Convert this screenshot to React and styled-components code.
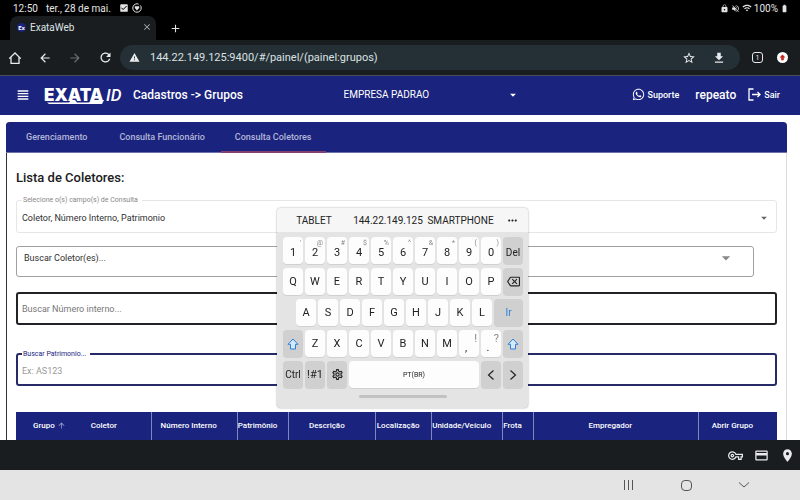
import React from "react";
import styled, { createGlobalStyle, css } from "styled-components";
import {
  MdArrowBack, MdArrowForward, MdRefresh, MdWarning, MdStarBorder, MdFileDownload,
  MdOutlineVpnKey, MdCreditCard, MdPlace, MdViewHeadline, MdClose, MdAdd, MdCheckBox,
  MdVolumeOff, MdWifi, MdBatteryFull, MdArrowDropDown, MdArrowUpward, MdMoreHoriz,
  MdOutlineBackspace, MdOutlineSettings, MdLock,
} from "react-icons/md";
import { FaWhatsapp } from "react-icons/fa";

const navy = "#1a237e";

const GlobalStyle = createGlobalStyle`
  * { box-sizing: border-box; }
  body { margin: 0; font-family: Roboto, "Liberation Sans", sans-serif; background: #fff; }
  button, input, select { font: inherit; color: inherit; }
  button { border: 0; padding: 0; background: none; display: inline-flex; align-items: center; justify-content: center; }
  svg { display: block; flex: none; }
`;

const Screen = styled.div`
  height: 100vh;
  display: flex;
  flex-direction: column;
  overflow: hidden;
`;

const StatusBar = styled.div`
  height: 16px;
  flex: none;
  display: flex;
  align-items: center;
  gap: 8px;
  padding: 0 11px 0 13px;
  background: #000;
  color: #e4e4e4;
  font-size: 10px;
`;

const StatusIcons = styled.span`
  display: flex;
  align-items: center;
  gap: ${(p) => (p.$end ? 2 : 3)}px;
  margin-left: ${(p) => (p.$end ? "auto" : "0")};
`;

const TabStrip = styled.div`
  height: 24px;
  flex: none;
  display: flex;
  background: #000;
  color: #dfe3e5;
  padding-left: 10px;
`;

const BrowserTab = styled.div`
  width: 146px;
  display: flex;
  align-items: center;
  gap: 4px;
  padding: 0 4px 2px 7px;
  border-radius: 8px 8px 0 0;
  background: #191d20;
  font-size: 10px;
  button { margin-left: auto; color: #aeb2b5; }
`;

const Favicon = styled.span`
  width: 9px;
  height: 9px;
  border-radius: 5px;
  background: ${navy};
  color: #fff;
  font-size: 6px;
  font-weight: 700;
  line-height: 9px;
  text-align: center;
`;

const NewTab = styled.button`
  width: 38px;
`;

const BrowserBar = styled.div`
  height: 36px;
  flex: none;
  display: flex;
  align-items: center;
  padding: 0 12px 0 8px;
  background: #191d20;
  border-bottom: 1px solid #454d57;
  color: #e8eaed;
`;

const NavButton = styled.button`
  width: ${(p) => p.$width || 30}px;
  height: 24px;
  justify-content: flex-start;
  color: ${(p) => (p.$dim ? "#6a6e71" : "#e8eaed")};
`;

const AddressBar = styled.div`
  flex: 1;
  height: 25px;
  display: flex;
  align-items: center;
  gap: 10px;
  padding: 0 13px 0 9px;
  margin-right: 12px;
  border-radius: 13px;
  background: #243036;
`;

const AddressInput = styled.input`
  flex: 1;
  min-width: 0;
  border: 0;
  padding: 0;
  outline: 0;
  background: none;
  color: #dde1e3;
  font-size: 11px;
`;

const AddressAction = styled.button`
  width: 16px;
  margin-left: 4px;
`;

const TabCount = styled.button`
  width: 11px;
  height: 11px;
  border: 1px solid #e8eaed;
  border-radius: 3px;
  font-size: 7px;
  margin-right: 14px;
`;

const UpdateButton = styled.button`
  width: 11px;
  height: 11px;
  border-radius: 6px;
  background: #fff;
  color: #c5221f;
`;

const AppHeader = styled.header`
  height: 39px;
  flex: none;
  display: flex;
  align-items: center;
  padding: 0 20px 2px 15px;
  background: ${navy};
  color: #fff;
`;

const MenuButton = styled.button`
  margin-right: 13px;
`;

const HeaderTitle = styled.h1`
  flex: 1;
  margin: 0 0 0 7px;
  font-size: 12px;
  font-weight: 500;
  white-space: nowrap;
`;

const SelectBox = styled.label`
  display: flex;
  align-items: center;
  select {
    flex: 1;
    min-width: 0;
    appearance: none;
    border: 0;
    padding: 0;
    outline: 0;
    background: none;
  }
`;

const CompanySelect = styled(SelectBox)`
  width: 176px;
  margin-right: 112px;
  font-size: 10px;
`;

const HeaderAction = styled.button`
  gap: 3px;
  margin-left: ${(p) => p.$gap || 0}px;
  font-size: ${(p) => (p.$large ? 12 : 9)}px;
  font-weight: 500;
`;

const Content = styled.main`
  flex: 1;
  min-height: 0;
  overflow: hidden;
  padding: 7px 13px 0 6px;
`;

const Card = styled.section`
  min-height: 100%;
  border-left: 1px solid #30333c;
  border-right: 1px solid #dcdcdc;
  border-radius: 4px 4px 0 0;
`;

const Tabs = styled.nav`
  height: 31px;
  display: flex;
  margin: 0 -1px;
  padding-left: 4px;
  border-radius: 4px 4px 0 0;
  border-bottom: 1px solid #6c72a8;
  background: ${navy};
`;

const Tab = styled.button`
  height: 31px;
  padding: 0 ${(p) => (p.$active ? 14 : 16)}px;
  color: #b4b7d8;
  font-size: 9px;
  font-weight: 500;
  border-bottom: 2px solid ${(p) => (p.$active ? "#83406f" : "transparent")};
`;

const Panel = styled.div`
  padding: 17px 9px 0;
`;

const SectionTitle = styled.h2`
  margin: 0 0 10px;
  color: #202020;
  font-size: 13px;
  font-weight: 500;
  line-height: 16px;
`;

const variants = {
  light: css`border: 1px solid #e6e6e6; color: #303030; height: 37px; margin: 0 0 13px;`,
  gray: css`border: 1px solid #a0a0a0; color: #303030; height: 31px; margin: 0 23px 15px 0; padding: 0 17px 8px 7px;`,
  dark: css`border: 2px solid #212126; color: #777; height: 33px; margin: 0 0 25px; padding: 0 4px;`,
  focus: css`border: 2px solid #262a66; color: #303030; height: 36px; margin: 0 0 26px; padding: 0 4px;`,
};

const Field = styled.fieldset`
  min-width: 0;
  padding: 0 5px;
  border-radius: 3px;
  font-size: 9px;
  display: flex;
  ${(p) => variants[p.$kind]}
  ${SelectBox} { flex: 1; }
  input {
    flex: 1;
    min-width: 0;
    border: 0;
    padding: 0;
    outline: 0;
    background: none;
  }
  input::placeholder { color: ${(p) => (p.$kind === "focus" ? "#999" : "#777")}; opacity: 1; }
`;

const Legend = styled.legend`
  height: 8px;
  padding: 0 4px 0 1px;
  color: ${(p) => (p.$active ? navy : "#888")};
  font-size: 7px;
  line-height: 8px;
`;

const GroupsTable = styled.table`
  width: 100%;
  table-layout: fixed;
  border-collapse: collapse;
  background: ${navy};
  color: #fff;
`;

const HeadCell = styled.th`
  width: ${(p) => p.$share}%;
  height: 28px;
  padding: 0 0 2px ${(p) => (p.$first ? 15 : 0)}px;
  border-left: 1px solid ${(p) => (p.$rule ? "#8186bd" : "transparent")};
  font-size: 8px;
  font-weight: 500;
  white-space: nowrap;
`;

const SortButton = styled.button`
  gap: 2px;
  svg { visibility: ${(p) => (p.$sorted ? "visible" : "hidden")}; color: #a3a7d0; }
`;

const AutofillBar = styled.div`
  height: 30px;
  flex: none;
  display: flex;
  align-items: center;
  justify-content: flex-end;
  gap: 11px;
  padding-right: 5px;
  background: #191d20;
  color: #e8eaed;
`;

const SystemBar = styled.div`
  height: 30px;
  flex: none;
  display: flex;
  align-items: center;
  justify-content: flex-end;
  gap: 46px;
  padding-right: 50px;
  background: #e4e4e4;
  color: #555;
`;

const Keyboard = styled.div`
  position: fixed;
  top: 208px;
  left: 277px;
  width: 251px;
  border-radius: 4px;
  overflow: hidden;
  background: #e4e4e4;
  box-shadow: 0 0 2px rgba(0, 0, 0, 0.4);
  color: #222;
`;

const Suggestions = styled.div`
  height: 24px;
  display: grid;
  grid-template-columns: 74px 74px 71px 1fr;
  background: #f6f6f6;
  font-size: 10px;
`;

const Rows = styled.div`
  display: flex;
  flex-direction: column;
  gap: 4px;
  padding: 5px 5px 0 6px;
`;

const KeyRow = styled.div`
  display: flex;
  gap: 2px;
  padding-left: ${(p) => (p.$indent ? 13 : 0)}px;
`;

const Key = styled.button`
  position: relative;
  height: 27px;
  width: 20px;
  flex: ${(p) => (p.$wide ? "1" : "none")};
  padding-top: ${(p) => (p.$low ? 3 : 0)}px;
  border-radius: 4px;
  background: ${(p) => (p.$soft ? "#d0d0d0" : "#fdfdfd")};
  box-shadow: 0 1px 0 #d0d0d0;
  color: ${(p) => (p.$blue ? "#2f7fd6" : "#222")};
  font-size: ${(p) => (p.$small ? 7 : p.$word ? 10 : 11)}px;
  white-space: nowrap;
`;

const PunctuationKey = styled(Key)`
  padding: 8px 6px 0 0;
`;

const KeyHint = styled.span`
  position: absolute;
  top: 3px;
  right: 2px;
  color: #888;
  font-size: ${(p) => (p.$large ? 11 : 7)}px;
  line-height: 1;
`;

const Handle = styled.div`
  width: 88px;
  height: 3px;
  margin: 7px auto 10px;
  border-radius: 2px;
  background: #c2c2c2;
`;

const Logo = () => (
  <svg width="82" height="24" viewBox="0 0 82 24" fill="#fff" role="img" aria-label="EXATA ID">
    <text x="0" y="18" fontFamily="Inter, sans-serif" fontWeight="900" fontSize="17">EXATA</text>
    <text x="62" y="18" fontFamily="Roboto, sans-serif" fontStyle="italic" fontWeight="500" fontSize="17">ID</text>
    <path d="M3 19.5H25L27 17H31L33 19.5H45L47 17H60L58 21H5Z" />
  </svg>
);

const HomeIcon = () => (
  <svg width="14" height="14" viewBox="0 0 14 14" fill="none" stroke="currentColor" strokeWidth="1.3">
    <path d="M1.2 7.6 7 2l5.8 5.6M3 6.2v6.2h8V6.2" />
  </svg>
);

const HeartCircle = () => (
  <svg width="10" height="10" viewBox="0 0 10 10" fill="none" stroke="currentColor">
    <circle cx="5" cy="5" r="4.2" strokeDasharray="21 2" />
    <path d="M5 7.4 2.8 5V3.6L4 3l1 .6L6 3l1.2.6V5Z" fill="currentColor" stroke="none" />
  </svg>
);

const UpdateIcon = () => (
  <svg width="7" height="7" viewBox="0 0 7 7" fill="currentColor"><path d="M3.5.5 6.5 3.5H4.8V6.3H2.2V3.5H.5Z" /></svg>
);

const ExitIcon = () => (
  <svg width="13" height="13" viewBox="0 0 13 13" fill="none" stroke="currentColor" strokeWidth="1.3">
    <path d="M5.5 1H1v11h4.5M4 6.5h8M9.5 4 12 6.5 9.5 9" />
  </svg>
);

const ShiftIcon = () => (
  <svg width="12" height="12" viewBox="0 0 12 12" fill="#d5e9fb" stroke="currentColor" strokeWidth="1" strokeLinejoin="round">
    <path d="M6 1 11 6.3H8.5V11h-5V6.3H1Z" />
  </svg>
);

const Chevron = ({ right }) => (
  <svg width="10" height="12" viewBox="0 0 10 12" fill="none" stroke="currentColor" strokeWidth="1.2">
    <path d={right ? "M2.5 1.5 7.5 6l-5 4.5" : "M7.5 1.5 2.5 6l5 4.5"} />
  </svg>
);

const RecentsIcon = () => (
  <svg width="12" height="12" viewBox="0 0 12 12" stroke="currentColor"><path d="M1.5 1v10M5.5 1v10M9.5 1v10" /></svg>
);
const HomeKeyIcon = () => (
  <svg width="11" height="11" viewBox="0 0 11 11" fill="none" stroke="currentColor"><rect x=".5" y=".5" width="10" height="10" rx="3.5" /></svg>
);
const HideIcon = () => (
  <svg width="12" height="12" viewBox="0 0 12 12" fill="none" stroke="currentColor"><path d="m1 3.5 5 4.5 5-4.5" /></svg>
);

const columns = [
  ["Grupo", 51], ["Coletor", 84], ["Número Interno", 86], ["Patrimônio", 52], ["Descrição", 87],
  ["Localização", 56], ["Unidade/Veículo", 71], ["Frota", 31], ["Empregador", 165], ["Abrir Grupo", 79],
];
const columnTotal = columns.reduce((sum, [, w]) => sum + w, 0);

const digits = [["1", "'"], ["2", "@"], ["3", "#"], ["4", "$"], ["5", "%"], ["6", "^"], ["7", "&"], ["8", "*"], ["9", "("], ["0", ")"]];
const letters = (text) => [...text].map((c) => <Key key={c}>{c}</Key>);

const ScreenKeyboard = () => (
  <Keyboard>
    <Suggestions>
      <button>TABLET</button>
      <button>144.22.149.125</button>
      <button>SMARTPHONE</button>
      <button aria-label="Mais"><MdMoreHoriz size={13} /></button>
    </Suggestions>
    <Rows>
      <KeyRow>
        {digits.map(([d, h]) => <Key key={d} $low>{d}<KeyHint>{h}</KeyHint></Key>)}
        <Key $soft $word $low>Del</Key>
      </KeyRow>
      <KeyRow>{letters("QWERTYUIOP")}<Key $soft aria-label="Apagar"><MdOutlineBackspace size={13} /></Key></KeyRow>
      <KeyRow $indent>{letters("ASDFGHJKL")}<Key $soft $wide $blue $word>Ir</Key></KeyRow>
      <KeyRow>
        <Key $soft $blue aria-label="Shift"><ShiftIcon /></Key>
        {letters("ZXCVBNM")}
        <PunctuationKey>,<KeyHint $large>!</KeyHint></PunctuationKey>
        <PunctuationKey>.<KeyHint $large>?</KeyHint></PunctuationKey>
        <Key $soft $blue aria-label="Shift direito"><ShiftIcon /></Key>
      </KeyRow>
      <KeyRow>
        <Key $soft $word>Ctrl</Key>
        <Key $soft>!#1</Key>
        <Key $soft aria-label="Configurações"><MdOutlineSettings size={13} /></Key>
        <Key $wide $small>PT(BR)</Key>
        <Key $soft aria-label="Esquerda"><Chevron /></Key>
        <Key $soft aria-label="Direita"><Chevron right /></Key>
      </KeyRow>
    </Rows>
    <Handle />
  </Keyboard>
);

export default function App() {
  return (
    <Screen>
      <GlobalStyle />
      <StatusBar>
        <span>12:50</span>
        <span>ter., 28 de mai.</span>
        <StatusIcons><MdCheckBox size={10} /><HeartCircle /></StatusIcons>
        <StatusIcons $end>
          <MdLock size={9} /><MdVolumeOff size={9} /><MdWifi size={10} /><span>100%</span><MdBatteryFull size={9} />
        </StatusIcons>
      </StatusBar>
      <TabStrip>
        <BrowserTab>
          <Favicon>Ex</Favicon>
          <span>ExataWeb</span>
          <button aria-label="Fechar aba"><MdClose size={10} /></button>
        </BrowserTab>
        <NewTab aria-label="Nova aba"><MdAdd size={13} /></NewTab>
      </TabStrip>
      <BrowserBar>
        <NavButton aria-label="Início"><HomeIcon /></NavButton>
        <NavButton aria-label="Voltar"><MdArrowBack size={14} /></NavButton>
        <NavButton $dim aria-label="Avançar"><MdArrowForward size={14} /></NavButton>
        <NavButton $width={22} aria-label="Recarregar"><MdRefresh size={15} /></NavButton>
        <AddressBar>
          <MdWarning size={11} />
          <AddressInput aria-label="Endereço" defaultValue="144.22.149.125:9400/#/painel/(painel:grupos)" />
          <AddressAction aria-label="Favorito"><MdStarBorder size={14} /></AddressAction>
          <AddressAction aria-label="Baixar"><MdFileDownload size={14} /></AddressAction>
        </AddressBar>
        <TabCount>1</TabCount>
        <UpdateButton aria-label="Atualizar"><UpdateIcon /></UpdateButton>
      </BrowserBar>
      <AppHeader>
        <MenuButton aria-label="Menu"><MdViewHeadline size={16} /></MenuButton>
        <Logo />
        <HeaderTitle>Cadastros -&gt; Grupos</HeaderTitle>
        <CompanySelect>
          <select aria-label="Empresa"><option>EMPRESA PADRAO</option></select>
          <MdArrowDropDown size={14} />
        </CompanySelect>
        <HeaderAction><FaWhatsapp size={13} />Suporte</HeaderAction>
        <HeaderAction $large $gap={16}>repeato</HeaderAction>
        <HeaderAction $gap={12}><ExitIcon />Sair</HeaderAction>
      </AppHeader>
      <Content>
        <Card>
          <Tabs>
            <Tab>Gerenciamento</Tab>
            <Tab>Consulta Funcionário</Tab>
            <Tab $active>Consulta Coletores</Tab>
          </Tabs>
          <Panel>
            <SectionTitle>Lista de Coletores:</SectionTitle>
            <Field $kind="light">
              <Legend>Selecione o(s) campo(s) de Consulta</Legend>
              <SelectBox>
                <select aria-label="Campos de consulta"><option>Coletor, Número Interno, Patrimonio</option></select>
                <MdArrowDropDown size={14} color="#666" />
              </SelectBox>
            </Field>
            <Field $kind="gray">
              <SelectBox>
                <select aria-label="Coletores"><option>Buscar Coletor(es)...</option></select>
                <MdArrowDropDown size={20} color="#888" />
              </SelectBox>
            </Field>
            <Field $kind="dark"><input aria-label="Número interno" placeholder="Buscar Número interno..." /></Field>
            <Field $kind="focus">
              <Legend $active>Buscar Patrimonio...</Legend>
              <input aria-label="Patrimonio" placeholder="Ex: AS123" />
            </Field>
            <GroupsTable>
              <thead>
                <tr>
                  {columns.map(([name, w], i) => (
                    <HeadCell key={name} $share={(w / columnTotal) * 100} $first={i === 0} $rule={i > 1}>
                      <SortButton $sorted={i === 0}>{name}<MdArrowUpward size={9} /></SortButton>
                    </HeadCell>
                  ))}
                </tr>
              </thead>
            </GroupsTable>
          </Panel>
        </Card>
      </Content>
      <AutofillBar><MdOutlineVpnKey size={15} /><MdCreditCard size={15} /><MdPlace size={15} /></AutofillBar>
      <SystemBar>
        <button aria-label="Recentes"><RecentsIcon /></button>
        <button aria-label="Tela inicial"><HomeKeyIcon /></button>
        <button aria-label="Ocultar teclado"><HideIcon /></button>
      </SystemBar>
      <ScreenKeyboard />
    </Screen>
  );
}
